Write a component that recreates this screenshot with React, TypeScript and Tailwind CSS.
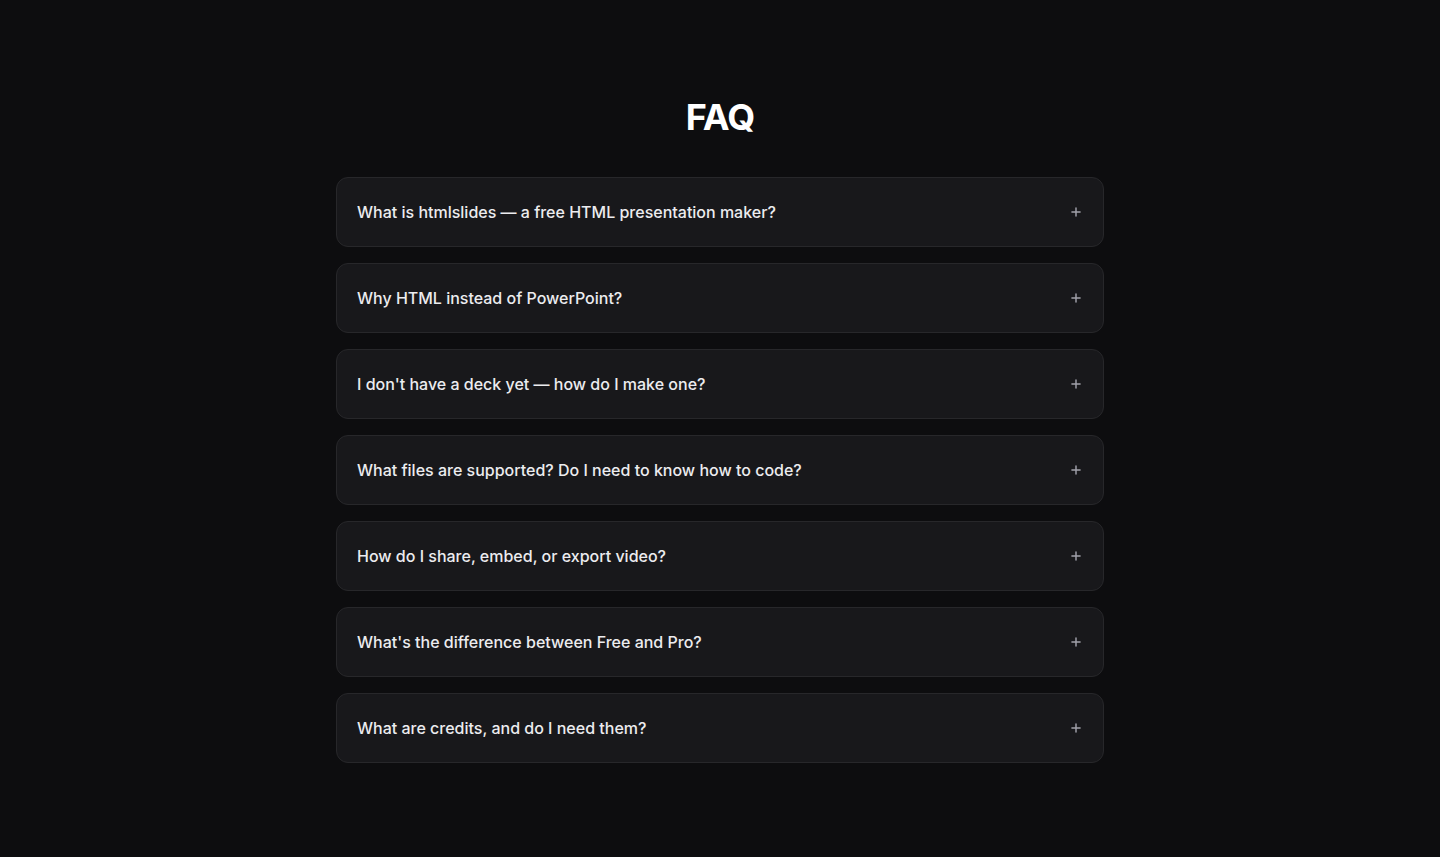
import { Plus } from 'lucide-react'

const questions = [
  'What is htmlslides — a free HTML presentation maker?',
  'Why HTML instead of PowerPoint?',
  "I don't have a deck yet — how do I make one?",
  'What files are supported? Do I need to know how to code?',
  'How do I share, embed, or export video?',
  "What's the difference between Free and Pro?",
  'What are credits, and do I need them?',
]

export default function App() {
  return (
    <div className="min-h-screen w-full bg-[#0d0d0f] text-white font-['Inter',sans-serif]">
      <section className="mx-auto max-w-3xl pt-[97px] pb-24">
        <h2 className="text-center text-4xl leading-10 font-bold tracking-tight mb-10">FAQ</h2>
        <div className="flex flex-col gap-4">
          {questions.map((q) => (
            <button
              key={q}
              type="button"
              className="flex w-full items-center justify-between rounded-xl border border-[#27272a] bg-[#18181b] px-5 py-[22px] text-left"
            >
              <span className="text-base leading-6 font-medium text-[#ececef]">{q}</span>
              <Plus className="h-3.5 w-3.5 text-[#a1a1aa]" strokeWidth={2.5} />
            </button>
          ))}
        </div>
      </section>
    </div>
  )
}
